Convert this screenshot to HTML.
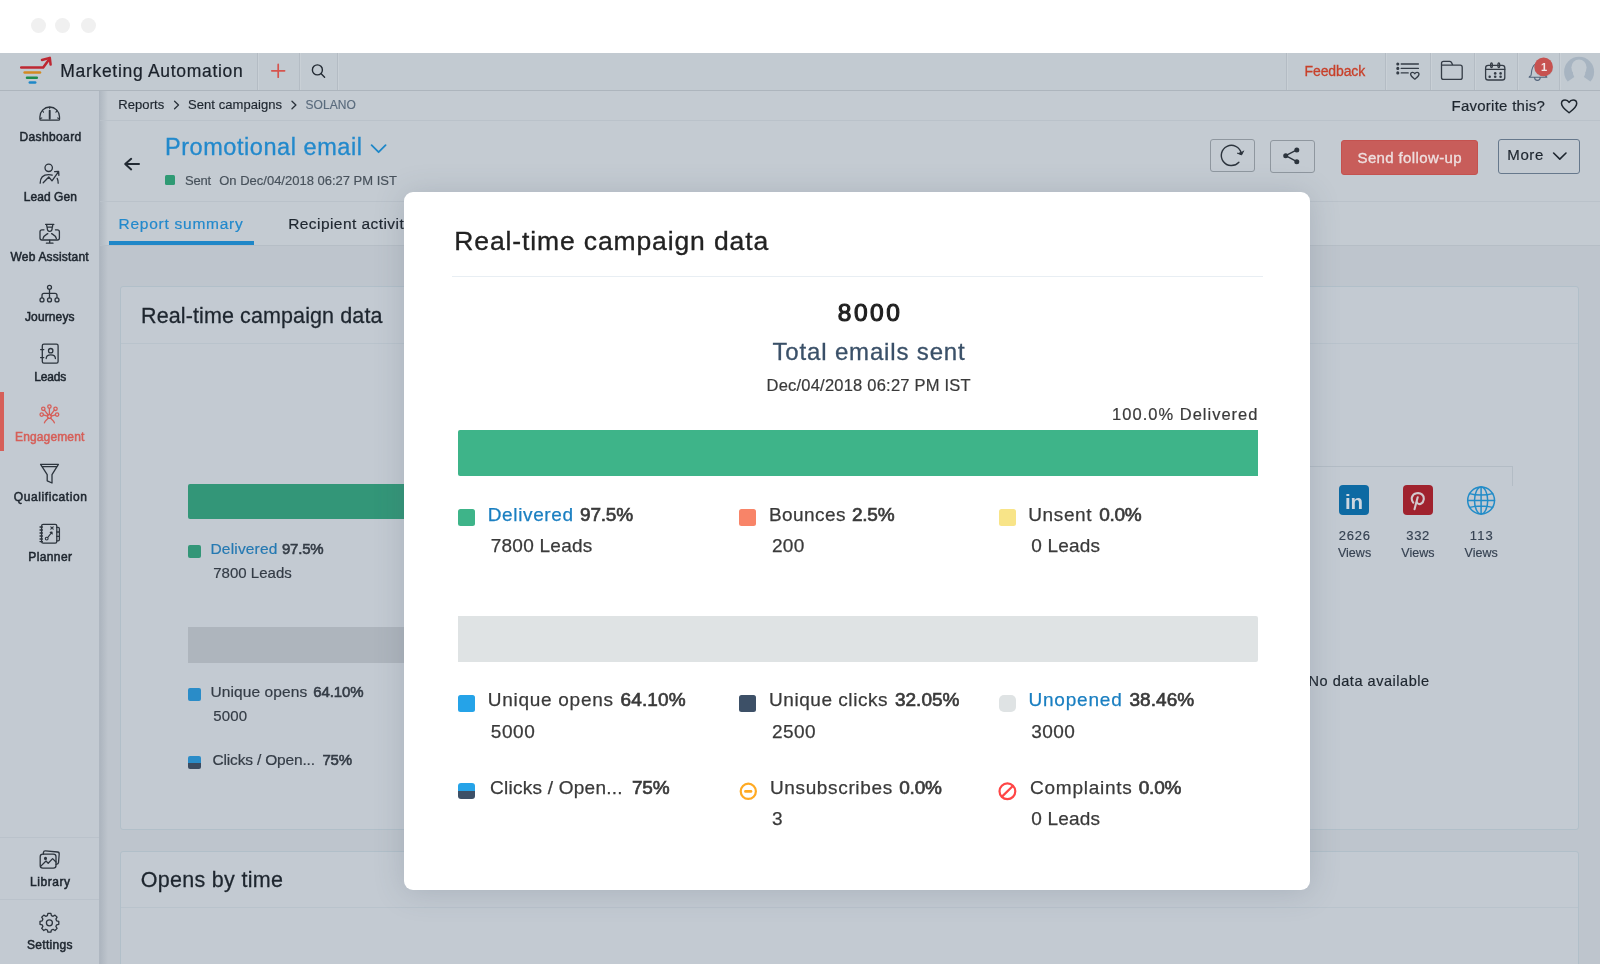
<!DOCTYPE html>
<html lang="en">
<head>
<meta charset="utf-8">
<title>Marketing Automation - Promotional email report</title>
<style>
html,body{margin:0;padding:0;}
body{width:1600px;height:964px;overflow:hidden;position:relative;background:#fff;font-family:"Liberation Sans",sans-serif;}
.a{position:absolute;display:block;}
.t{position:absolute;white-space:nowrap;display:block;}
svg{position:absolute;overflow:visible;}
.dot{position:absolute;width:15px;height:15px;border-radius:50%;background:#f0f0f0;top:18px;}
.sep{position:absolute;top:53px;height:37px;width:1px;background:#b4bcc4;box-shadow:1px 0 0 rgba(255,255,255,.12);}
.hl{position:absolute;height:1px;background:#bac2ca;}
.card{position:absolute;left:120px;width:1457px;border:1px solid #b1bfc9;border-radius:3px;background:#c3cad2;}
.sq{position:absolute;width:13px;height:13px;border-radius:2px;}
.msq{position:absolute;width:17px;height:17px;border-radius:2.5px;}
.btn{position:absolute;box-sizing:border-box;border:1px solid #8f979f;border-radius:3px;}
</style>
</head>
<body>
<!-- window chrome -->
<div class="dot" style="left:30.5px"></div><div class="dot" style="left:55px"></div><div class="dot" style="left:80.5px"></div>

<div class="a" id="root" style="left:0;top:0;width:1600px;height:964px;will-change:transform">
<!-- dimmed application -->
<div class="a" style="left:0;top:53px;width:1600px;height:911px;background:#bec5cd"></div>
<div class="a" style="left:100px;top:91px;width:1500px;height:154px;background:#c4cbd2"></div>
<div class="a" style="left:0;top:53px;width:1600px;height:37px;background:#c2cad1"></div>
<div class="a" style="left:0;top:90px;width:1600px;height:1px;background:#adb5bd"></div>
<div class="sep" style="left:257px"></div><div class="sep" style="left:299px"></div><div class="sep" style="left:337px"></div>
<div class="sep" style="left:1286px"></div><div class="sep" style="left:1385px"></div><div class="sep" style="left:1430px"></div>
<div class="sep" style="left:1474px"></div><div class="sep" style="left:1517px"></div><div class="sep" style="left:1559px"></div>

<!-- sidebar -->
<div class="a" style="left:0;top:91px;width:100px;height:873px;background:#c3cad2"></div>
<div class="a" style="left:99px;top:91px;width:9px;height:873px;background:linear-gradient(90deg,rgba(150,160,172,.48),rgba(150,160,172,0))"></div>
<div class="a" style="left:0;top:392px;width:3.5px;height:58.5px;background:#d65f59"></div>
<div class="hl" style="left:0;top:837px;width:99px;background:#bac2cb"></div>
<div class="hl" style="left:0;top:899px;width:99px;background:#bac2cb"></div>

<!-- header lines -->
<div class="hl" style="left:100px;top:120px;width:1500px"></div>
<div class="hl" style="left:100px;top:201px;width:1500px"></div>
<div class="hl" style="left:100px;top:245px;width:1500px;background:#b6bec6"></div>
<div class="a" style="left:109px;top:241px;width:144.5px;height:4px;background:#1f87c8"></div>

<!-- header buttons -->
<div class="btn" style="left:1210px;top:139px;width:45px;height:33px"></div>
<div class="btn" style="left:1270px;top:140px;width:45px;height:33px"></div>
<div class="a" style="left:1341px;top:140px;width:136.5px;height:35px;border-radius:3px;background:#c85d5a;box-sizing:border-box;border:1px solid #c4524f"></div>
<div class="btn" style="left:1497.5px;top:139px;width:82.5px;height:34.5px;border-color:#66788c"></div>
<div class="a" style="left:164.75px;top:175px;width:10px;height:10px;border-radius:1.5px;background:#2f9a74"></div>

<!-- cards -->
<div class="card" style="top:286px;height:542px"></div>
<div class="hl" style="left:121px;top:343px;width:1457px;background:#b9c3cc"></div>
<div class="card" style="top:851px;height:140px"></div>
<div class="hl" style="left:121px;top:907px;width:1457px;background:#b9c3cc"></div>

<div class="a" style="left:188px;top:484px;width:500px;height:35px;border-radius:2px;background:#339678"></div>
<div class="a" style="left:188px;top:627px;width:500px;height:35.5px;background:#aeb5bd"></div>
<div class="sq" style="left:188px;top:545px;background:#339678"></div>
<div class="sq" style="left:188px;top:688.25px;background:#2a8cc8"></div>
<div class="sq" style="left:188px;top:756px;height:12.5px;background:linear-gradient(180deg,#2a8cc8 0,#2a8cc8 54%,#3b4b60 54%,#3b4b60 100%)"></div>

<div class="a" style="left:1200px;top:466px;width:312px;height:1px;background:#b3bcc5"></div>
<div class="a" style="left:1512px;top:466px;width:1px;height:20px;background:#b3bcc5"></div>
<div class="a" style="left:1339px;top:485px;width:30px;height:30px;border-radius:4px;background:#0d6aa3"></div>
<div class="a" style="left:1403px;top:485px;width:30px;height:30px;border-radius:4px;background:#a0222e"></div>

<svg class="ic" width="1600" height="964" viewBox="0 0 1600 964" style="left:0;top:0" fill="none" stroke-linecap="round" stroke-linejoin="round">
<!-- logo -->
<g stroke-width="2.5">
<path d="M21.2 67.5H43.2L49.4 59" stroke="#be2832"/>
<path d="M42 60L49.8 57.9L50.6 64.6" stroke="#be2832"/>
<path d="M24.6 72.6H40" stroke="#d38a22"/>
<path d="M27 77.7H36.8" stroke="#1e8c4c"/>
<path d="M29.8 82.5H35.2" stroke="#1e88c8"/>
</g>
<!-- plus, search -->
<path d="M271.8 70.8H284.6M278.2 64.4V77.2" stroke="#d6544e" stroke-width="1.7"/>
<g stroke="#232b34" stroke-width="1.4">
<circle cx="317.4" cy="69.9" r="5"/><path d="M321.2 73.7L324.6 77.2"/>
</g>
<!-- top right icons -->
<g stroke="#343c46" stroke-width="1.3">
<circle cx="1397.8" cy="64" r="0.9" fill="#343c46"/><circle cx="1397.8" cy="68.4" r="0.9" fill="#343c46"/><circle cx="1397.8" cy="72.9" r="0.9" fill="#343c46"/>
<path d="M1401.2 64H1418.4M1401.2 68.4H1418.4M1401.2 72.9H1408.2"/>
<path d="M1414.8 79.2C1412.8 77.6 1410.6 76.2 1410.6 74.3C1410.6 73 1411.6 72.3 1412.6 72.3C1413.6 72.3 1414.4 72.9 1414.8 73.7C1415.2 72.9 1416 72.3 1417 72.3C1418 72.3 1419 73 1419 74.3C1419 76.2 1416.8 77.6 1414.8 79.2Z"/>
<path d="M1441.5 77.4V63.4Q1441.5 61.4 1443.5 61.4H1449.6Q1450.8 61.4 1451.4 62.4L1452.9 65.2H1460.2Q1462.2 65.2 1462.2 67.2V77.4Q1462.2 79.4 1460.2 79.4H1443.5Q1441.5 79.4 1441.5 77.4ZM1441.5 65.2H1452.9"/>
<rect x="1485.6" y="65.3" width="19.2" height="14.7" rx="2.6"/>
<path d="M1485.6 69.3H1504.8"/>
<ellipse cx="1491.5" cy="65.2" rx="0.9" ry="2.4"/><ellipse cx="1498.8" cy="65.2" rx="0.9" ry="2.4"/>
<g fill="#343c46" stroke="none"><circle cx="1489.7" cy="76.8" r="1.25"/><circle cx="1495.2" cy="76.8" r="1.3"/><circle cx="1500.6" cy="76.8" r="1.3"/><circle cx="1495.2" cy="73.4" r="1.3"/><circle cx="1500.6" cy="73.4" r="1.3"/></g>
</g>
<!-- bell + badge + avatar -->
<path d="M1529.2 77.3C1529.2 76.2 1530.4 76.4 1531 75.2C1531.8 73.4 1531 67 1535 64.4C1536.6 63.4 1539.4 63.4 1541 64.4C1545 67 1544.2 73.4 1545 75.2C1545.6 76.4 1546.8 76.2 1546.8 77.3ZM1534.6 77.5C1534.6 81.3 1540.2 81.3 1540.2 77.5" stroke="#52647a" stroke-width="1.1"/>
<circle cx="1543.7" cy="67.6" r="9.4" fill="rgba(120,130,145,.25)" stroke="none"/>
<circle cx="1543.6" cy="66.9" r="9.3" fill="#c75250" stroke="none"/>
<g stroke="none"><circle cx="1579.1" cy="71.85" r="15" fill="#a7b4c1"/>
<ellipse cx="1579" cy="67.6" rx="7.6" ry="8.2" fill="#c2cad1"/>
<path d="M1573 69V74L1574.3 77L1562 85.6V89.6H1596.2V85.6L1583.9 77L1585.2 74V69Z" fill="#c2cad1"/></g>
<!-- breadcrumb chevrons, heart -->
<g stroke="#2a323b" stroke-width="1.3"><path d="M174.6 101.2L178.5 105L174.6 108.8M292 101.2L295.9 105L292 108.8"/></g>
<path d="M1569.1 112.7C1566 110.2 1561.5 107 1561.5 103.4C1561.5 101 1563.3 99.9 1565.1 99.9C1566.9 99.9 1568.3 100.9 1569.1 102.4C1569.9 100.9 1571.3 99.9 1573.1 99.9C1574.9 99.9 1576.7 101 1576.7 103.4C1576.7 107 1572.2 110.2 1569.1 112.7Z" stroke="#1e262f" stroke-width="1.5"/>
<!-- header icons -->
<path d="M125.2 164H139M131.2 158.8L125.2 164L131.2 169.4" stroke="#222a33" stroke-width="2"/>
<path d="M371.6 145.2L378.6 152.2L385.6 145.2" stroke="#1e87c8" stroke-width="1.8"/>
<path d="M1553.6 153L1559.8 159.1L1566 153" stroke="#1e262f" stroke-width="1.6"/>
<g stroke="#2c343d" stroke-width="1.4">
<path d="M1238.9 162.2A10.1 10.1 0 1 1 1241.2 153"/>
<path d="M1237.4 153.2L1241.6 154.9L1243.6 151" fill="#2c343d" stroke-width="1"/>
<path d="M1296.8 149.9L1285.7 155.7L1296.8 161.7"/>
<g fill="#2c343d" stroke="none"><circle cx="1285.7" cy="155.7" r="2.5"/><circle cx="1296.8" cy="149.9" r="2.5"/><circle cx="1296.8" cy="161.7" r="2.5"/></g>
</g>
<!-- sidebar icons -->
<g stroke="#2c343d" stroke-width="1.3">
<!-- dashboard -->
<path d="M40.8 120.2Q39.9 120.2 39.9 119.2V116.8A9.8 9.8 0 0 1 59.5 116.8V119.2Q59.5 120.2 58.6 120.2Z"/>
<path d="M49.7 107.2V108.6M42.5 110.6L43.5 112.2M56.9 110.6L55.9 112.2M40.4 118.4L41.8 117.9M59 118.4L57.6 117.9" stroke-width="1.1"/>
<path d="M49.7 110.8V118.8" stroke-width="1.9"/>
<!-- lead gen -->
<circle cx="48.7" cy="167.8" r="3.7"/>
<path d="M40.2 183.2C40.2 177.6 43.6 174.6 48.7 174.6C50 174.6 51.2 174.8 52.2 175.2M57.2 178.4C57.9 179.8 58.2 181.4 58.2 183.2"/>
<path d="M43.2 182.8L48.8 177L52 180.8L58.2 172.2M54.6 171.6L58.6 171.4L58.9 175.4"/>
<!-- web assistant -->
<path d="M44 229.8H42Q40 229.8 40 231.8V238Q40 240 42 240H57.4Q59.4 240 59.4 238V231.8Q59.4 229.8 57.4 229.8H55.4"/>
<path d="M49.7 240.2V243M46.4 243.2H53"/>
<path d="M45.6 224.4H53.8M46.6 224.6L47 227.2H52.4L52.8 224.6M47.2 227.4C47.2 232.6 52.2 232.6 52.2 227.4M43 238.6C43.4 235.4 46 234.8 47.8 233.6M56.4 238.6C56 235.4 53.4 234.8 51.6 233.6"/>
<!-- journeys -->
<circle cx="49.5" cy="287.3" r="2"/><circle cx="42" cy="299.9" r="2"/><circle cx="49.5" cy="299.9" r="2"/><circle cx="57" cy="299.9" r="2"/>
<path d="M49.5 289.4V297.8M42 297.8V295.4Q42 293.4 44 293.4H55Q57 293.4 57 295.4V297.8"/>
<!-- leads -->
<rect x="42.3" y="344.2" width="15.8" height="19" rx="1.6"/>
<path d="M40.6 349.6H43.8M40.6 357.6H43.8"/>
<circle cx="50.7" cy="350.7" r="2.2"/><path d="M46.2 358.6C46.2 353.6 55.4 353.6 55.4 358.6"/>
<!-- funnel -->
<path d="M40.6 464.4H58.4L52 474.6V483L47.2 480.8V474.6ZM41.8 466.6H57.2"/>
<!-- planner -->
<rect x="41.6" y="524.4" width="15.2" height="18.8" rx="1.6"/>
<path d="M40 527H42.4M40 530H42.4M40 533H42.4M40 536H42.4M40 539H42.4M40 541.6H42.4M56.8 527.4H58Q59.4 527.4 59.4 528.8V539.4Q59.4 540.8 58 540.8H56.8M56.8 532H59.4M56.8 536.4H59.4"/>
<path d="M50.8 526.8L53.2 529.2M53.2 526.8L50.8 529.2M48 537.2L51.6 532.6M50.2 532.4L52 532L52.2 534" stroke-width="1.1"/>
<circle cx="46.7" cy="538.6" r="1.4" stroke-width="1.1"/>
<!-- library -->
<rect x="40.2" y="854.2" width="15.8" height="14" rx="2.6"/>
<path d="M43.4 854V852.6Q43.6 850.8 45.4 850.9L57.6 852Q59.4 852.2 59.2 854L58.5 862.6Q58.4 864 56.2 864.4"/>
<path d="M40.6 866.4L46 861L48.2 863.2L52.6 858.6L56 862"/>
<circle cx="45.5" cy="858.4" r="0.9" fill="#2c343d"/>
<!-- settings -->
<circle cx="49.4" cy="922.8" r="3"/>
<path d="M47.9 913.4h3l.5 2.2 1.7.7 1.9-1.2 2.1 2.1-1.2 1.9.7 1.7 2.2.5v3l-2.2.5-.7 1.7 1.2 1.9-2.1 2.1-1.9-1.2-1.7.7-.5 2.2h-3l-.5-2.2-1.7-.7-1.9 1.2-2.1-2.1 1.2-1.9-.7-1.7-2.2-.5v-3l2.2-.5.7-1.7-1.2-1.9 2.1-2.1 1.9 1.2 1.7-.7z"/>
</g>
<!-- engagement (active) -->
<g stroke="#d65f59" stroke-width="1.3">
<circle cx="49.4" cy="416.4" r="1.9"/>
<circle cx="49.4" cy="406.6" r="1.7"/><circle cx="43.3" cy="408.8" r="1.7"/><circle cx="55.5" cy="408.8" r="1.7"/><circle cx="41.7" cy="414.6" r="1.7"/><circle cx="57.1" cy="414.6" r="1.7"/>
<path d="M49.4 408.4V414.4M44.4 410.2L48.2 415M54.4 410.2L50.6 415M43.4 414.9L47.5 416.1M55.4 414.9L51.3 416.1M48.4 418C46.8 419.6 45 420.6 44.4 422.8M50.4 418C52 419.6 53.8 420.6 54.4 422.8"/>
</g>
<!-- globe -->
<g stroke="#228cc8" stroke-width="1.5">
<circle cx="1481.1" cy="500.5" r="13.4"/><ellipse cx="1481.1" cy="500.5" rx="6.6" ry="13.4"/>
<path d="M1481.1 487.1V513.9M1467.7 500.5H1494.5M1469.6 493.6C1476 495.6 1486.2 495.6 1492.6 493.6M1469.6 507.4C1476 505.4 1486.2 505.4 1492.6 507.4"/>
</g>
<!-- pinterest p -->
<path d="M1417.7 497.2L1414.5 509.2M1413.2 502.6C1410.6 499.4 1411.4 494.3 1416.6 493.3C1421.4 492.5 1424.3 495.6 1423.7 499.5C1423.1 503.3 1420.3 504.9 1418.1 503.7C1417.1 503.1 1416.8 502.3 1416.8 501.6" stroke="#d3c8cd" stroke-width="2.1"/>
</svg>
<span class="t" style="left:1541px;top:60.5px;font-size:11px;line-height:13px;font-weight:700;color:#f2e6e6">1</span>
<span class="t" style="left:1345px;top:490px;font-size:20.5px;line-height:24px;font-weight:700;letter-spacing:-0.2px;color:#cdd6df">in</span>

<span class="t" style="left:60.25px;top:60.00px;font-size:17.5px;line-height:22px;letter-spacing:0.698px;color:#1a212a;-webkit-text-stroke:0.23px currentColor;">Marketing Automation</span>
<span class="t" style="left:1304.50px;top:62.00px;font-size:14px;line-height:18px;letter-spacing:-0.105px;color:#c8402a;-webkit-text-stroke:0.29px currentColor;">Feedback</span>
<span class="t" style="left:118.30px;top:96.00px;font-size:13px;line-height:17px;letter-spacing:0.063px;color:#1e262f;-webkit-text-stroke:0.17px currentColor;">Reports</span>
<span class="t" style="left:188.00px;top:96.00px;font-size:13px;line-height:17px;letter-spacing:0.060px;color:#1e262f;-webkit-text-stroke:0.17px currentColor;">Sent campaigns</span>
<span class="t" style="left:305.50px;top:97.00px;font-size:12px;line-height:16px;letter-spacing:0.064px;color:#5a6b7d;-webkit-text-stroke:0.16px currentColor;">SOLANO</span>
<span class="t" style="left:1451.50px;top:96.00px;font-size:15px;line-height:19px;letter-spacing:0.254px;color:#1e262f;-webkit-text-stroke:0.19px currentColor;">Favorite this?</span>
<span class="t" style="left:165.00px;top:132.00px;font-size:23.5px;line-height:30px;letter-spacing:0.556px;color:#2289cc;-webkit-text-stroke:0.31px currentColor;">Promotional email</span>
<span class="t" style="left:185.00px;top:172.00px;font-size:13px;line-height:17px;letter-spacing:-0.250px;color:#47515b;-webkit-text-stroke:0.17px currentColor;">Sent</span>
<span class="t" style="left:219.25px;top:172.00px;font-size:13px;line-height:17px;letter-spacing:-0.003px;color:#47515b;-webkit-text-stroke:0.17px currentColor;">On Dec/04/2018 06:27 PM IST</span>
<span class="t" style="left:1357.50px;top:148.00px;font-size:15px;line-height:19px;letter-spacing:0.374px;color:#eedfdf;-webkit-text-stroke:0.32px currentColor;">Send follow-up</span>
<span class="t" style="left:1507.25px;top:145.00px;font-size:15px;line-height:19px;letter-spacing:0.639px;color:#1e262f;-webkit-text-stroke:0.19px currentColor;">More</span>
<span class="t" style="left:118.50px;top:214.00px;font-size:15.5px;line-height:19px;letter-spacing:0.746px;color:#2289cc;-webkit-text-stroke:0.20px currentColor;">Report summary</span>
<span class="t" style="left:288.20px;top:214.00px;font-size:15.5px;line-height:19px;letter-spacing:0.435px;color:#1e262f;-webkit-text-stroke:0.20px currentColor;">Recipient activities</span>
<span class="t" style="left:19.50px;top:129.00px;font-size:12px;line-height:16px;letter-spacing:0.371px;color:#1e262f;-webkit-text-stroke:0.51px currentColor;">Dashboard</span>
<span class="t" style="left:23.75px;top:189.00px;font-size:12px;line-height:16px;letter-spacing:0.066px;color:#1e262f;-webkit-text-stroke:0.51px currentColor;">Lead Gen</span>
<span class="t" style="left:10.50px;top:249.00px;font-size:12px;line-height:16px;letter-spacing:0.196px;color:#1e262f;-webkit-text-stroke:0.51px currentColor;">Web Assistant</span>
<span class="t" style="left:25.00px;top:309.00px;font-size:12px;line-height:16px;letter-spacing:0.116px;color:#1e262f;-webkit-text-stroke:0.51px currentColor;">Journeys</span>
<span class="t" style="left:34.25px;top:369.00px;font-size:12px;line-height:16px;letter-spacing:-0.174px;color:#1e262f;-webkit-text-stroke:0.51px currentColor;">Leads</span>
<span class="t" style="left:15.00px;top:429.00px;font-size:12px;line-height:16px;letter-spacing:0.143px;color:#d65f59;-webkit-text-stroke:0.51px currentColor;">Engagement</span>
<span class="t" style="left:13.75px;top:489.00px;font-size:12px;line-height:16px;letter-spacing:0.595px;color:#1e262f;-webkit-text-stroke:0.51px currentColor;">Qualification</span>
<span class="t" style="left:28.25px;top:549.00px;font-size:12px;line-height:16px;letter-spacing:0.397px;color:#1e262f;-webkit-text-stroke:0.51px currentColor;">Planner</span>
<span class="t" style="left:30.00px;top:874.00px;font-size:12px;line-height:16px;letter-spacing:0.553px;color:#1e262f;-webkit-text-stroke:0.51px currentColor;">Library</span>
<span class="t" style="left:27.00px;top:937.00px;font-size:12px;line-height:16px;letter-spacing:0.306px;color:#1e262f;-webkit-text-stroke:0.51px currentColor;">Settings</span>
<span class="t" style="left:141.00px;top:302.00px;font-size:21.5px;line-height:28px;letter-spacing:0.111px;color:#1e262f;-webkit-text-stroke:0.28px currentColor;">Real-time campaign data</span>
<span class="t" style="left:210.50px;top:539.00px;font-size:15.5px;line-height:19px;letter-spacing:0.175px;color:#2579b2;-webkit-text-stroke:0.20px currentColor;">Delivered</span>
<span class="t" style="left:282.00px;top:539.00px;font-size:15px;line-height:19px;letter-spacing:-0.236px;color:#343c46;-webkit-text-stroke:0.58px currentColor;">97.5%</span>
<span class="t" style="left:213.25px;top:563.00px;font-size:15px;line-height:19px;letter-spacing:0.010px;color:#343c46;-webkit-text-stroke:0.19px currentColor;">7800 Leads</span>
<span class="t" style="left:210.50px;top:682.00px;font-size:15.5px;line-height:19px;letter-spacing:0.099px;color:#343c46;-webkit-text-stroke:0.20px currentColor;">Unique opens</span>
<span class="t" style="left:313.25px;top:682.00px;font-size:15px;line-height:19px;letter-spacing:-0.107px;color:#343c46;-webkit-text-stroke:0.58px currentColor;">64.10%</span>
<span class="t" style="left:213.25px;top:706.00px;font-size:15px;line-height:19px;letter-spacing:0.158px;color:#343c46;-webkit-text-stroke:0.19px currentColor;">5000</span>
<span class="t" style="left:212.50px;top:750.00px;font-size:15.5px;line-height:19px;letter-spacing:-0.169px;color:#343c46;-webkit-text-stroke:0.20px currentColor;">Clicks / Open...</span>
<span class="t" style="left:322.50px;top:750.00px;font-size:15px;line-height:19px;letter-spacing:-0.250px;color:#343c46;-webkit-text-stroke:0.58px currentColor;">75%</span>
<span class="t" style="left:1338.80px;top:527.00px;font-size:13px;line-height:17px;letter-spacing:0.753px;color:#364252;-webkit-text-stroke:0.17px currentColor;">2626</span>
<span class="t" style="left:1337.90px;top:545.00px;font-size:12.5px;line-height:16px;letter-spacing:0.033px;color:#364252;-webkit-text-stroke:0.16px currentColor;">Views</span>
<span class="t" style="left:1406.30px;top:527.00px;font-size:13px;line-height:17px;letter-spacing:0.620px;color:#364252;-webkit-text-stroke:0.17px currentColor;">332</span>
<span class="t" style="left:1401.25px;top:545.00px;font-size:12.5px;line-height:16px;letter-spacing:0.033px;color:#364252;-webkit-text-stroke:0.16px currentColor;">Views</span>
<span class="t" style="left:1469.70px;top:527.00px;font-size:13px;line-height:17px;letter-spacing:1.202px;color:#364252;-webkit-text-stroke:0.17px currentColor;">113</span>
<span class="t" style="left:1464.60px;top:545.00px;font-size:12.5px;line-height:16px;letter-spacing:0.033px;color:#364252;-webkit-text-stroke:0.16px currentColor;">Views</span>
<span class="t" style="left:1308.50px;top:672.00px;font-size:14.5px;line-height:18px;letter-spacing:0.532px;color:#1e262f;-webkit-text-stroke:0.19px currentColor;">No data available</span>
<span class="t" style="left:140.75px;top:866.00px;font-size:21.5px;line-height:28px;letter-spacing:0.299px;color:#1e262f;-webkit-text-stroke:0.28px currentColor;">Opens by time</span>

<!-- modal -->
<div class="a" style="left:404px;top:192px;width:906px;height:698px;border-radius:9px;background:#fff;box-shadow:0 2px 30px rgba(70,85,105,.21)"></div>
<div class="a" style="left:452px;top:276px;width:810.5px;height:1px;background:#e8eef3"></div>
<div class="a" style="left:458px;top:430px;width:799.7px;height:46px;border-radius:2px 0 0 2px;background:#3eb489"></div>
<div class="a" style="left:458px;top:616.25px;width:799.7px;height:45.5px;border-radius:0 2px 2px 0;background:#dfe3e4"></div>
<div class="msq" style="left:458px;top:509px;background:#3eb489"></div>
<div class="msq" style="left:739.25px;top:509px;background:#f88468"></div>
<div class="msq" style="left:998.5px;top:509px;background:#f8e488"></div>
<div class="msq" style="left:458px;top:695px;background:#25a3e8"></div>
<div class="msq" style="left:739.25px;top:695px;background:#3d5067"></div>
<div class="msq" style="left:998.5px;top:695px;border-radius:5px;background:#dfe3e4"></div>
<div class="msq" style="left:458px;top:783px;height:16px;border-radius:3px;background:linear-gradient(180deg,#25a3e8 0,#25a3e8 53%,#3d5067 53%,#3d5067 100%)"></div>
<svg width="1600" height="964" viewBox="0 0 1600 964" style="left:0;top:0" fill="none" stroke-linecap="round">
<circle cx="748.3" cy="791.3" r="7.6" stroke="#ffaa23" stroke-width="2.2"/><path d="M745.4 791.4H751" stroke="#ffaa23" stroke-width="2.6"/>
<circle cx="1007.4" cy="791.3" r="7.9" stroke="#ff4646" stroke-width="2.2"/><path d="M1002 796.6L1012.8 786" stroke="#ff4646" stroke-width="2.2"/>
</svg>
<span class="t" style="left:454.30px;top:224.00px;font-size:26.5px;line-height:34px;letter-spacing:0.875px;color:#222;-webkit-text-stroke:0.34px currentColor;">Real-time campaign data</span>
<span class="t" style="left:837.75px;top:297.00px;font-size:24.5px;line-height:31px;letter-spacing:2.541px;color:#1f1f1f;-webkit-text-stroke:1.09px currentColor;">8000</span>
<span class="t" style="left:772.50px;top:336.00px;font-size:24px;line-height:31px;letter-spacing:0.839px;color:#3a5068;-webkit-text-stroke:0.31px currentColor;">Total emails sent</span>
<span class="t" style="left:766.50px;top:374.00px;font-size:16.5px;line-height:22px;letter-spacing:0.219px;color:#3a3a3a;-webkit-text-stroke:0.21px currentColor;">Dec/04/2018 06:27 PM IST</span>
<span class="t" style="left:1112.10px;top:403.00px;font-size:16.5px;line-height:22px;letter-spacing:1.009px;color:#3a3a3a;-webkit-text-stroke:0.21px currentColor;">100.0% Delivered</span>
<span class="t" style="left:487.75px;top:502.00px;font-size:19px;line-height:25px;letter-spacing:0.632px;color:#1a7fc1;-webkit-text-stroke:0.25px currentColor;">Delivered</span>
<span class="t" style="left:580.00px;top:502.00px;font-size:19px;line-height:25px;letter-spacing:-0.182px;color:#3a3a3a;-webkit-text-stroke:0.67px currentColor;">97.5%</span>
<span class="t" style="left:490.75px;top:533.00px;font-size:19px;line-height:25px;letter-spacing:0.243px;color:#3a3a3a;-webkit-text-stroke:0.25px currentColor;">7800 Leads</span>
<span class="t" style="left:769.00px;top:502.00px;font-size:19px;line-height:25px;letter-spacing:0.427px;color:#3a3a3a;-webkit-text-stroke:0.25px currentColor;">Bounces</span>
<span class="t" style="left:852.00px;top:502.00px;font-size:19px;line-height:25px;letter-spacing:-0.250px;color:#3a3a3a;-webkit-text-stroke:0.67px currentColor;">2.5%</span>
<span class="t" style="left:772.00px;top:533.00px;font-size:19px;line-height:25px;letter-spacing:0.308px;color:#3a3a3a;-webkit-text-stroke:0.25px currentColor;">200</span>
<span class="t" style="left:1028.25px;top:502.00px;font-size:19px;line-height:25px;letter-spacing:0.626px;color:#3a3a3a;-webkit-text-stroke:0.25px currentColor;">Unsent</span>
<span class="t" style="left:1099.20px;top:502.00px;font-size:19px;line-height:25px;letter-spacing:-0.250px;color:#3a3a3a;-webkit-text-stroke:0.67px currentColor;">0.0%</span>
<span class="t" style="left:1031.25px;top:533.00px;font-size:19px;line-height:25px;letter-spacing:0.189px;color:#3a3a3a;-webkit-text-stroke:0.25px currentColor;">0 Leads</span>
<span class="t" style="left:487.75px;top:687.00px;font-size:19px;line-height:25px;letter-spacing:0.727px;color:#3a3a3a;-webkit-text-stroke:0.25px currentColor;">Unique opens</span>
<span class="t" style="left:620.50px;top:687.00px;font-size:19px;line-height:25px;letter-spacing:0.141px;color:#3a3a3a;-webkit-text-stroke:0.67px currentColor;">64.10%</span>
<span class="t" style="left:490.75px;top:719.00px;font-size:19px;line-height:25px;letter-spacing:0.600px;color:#3a3a3a;-webkit-text-stroke:0.25px currentColor;">5000</span>
<span class="t" style="left:769.00px;top:687.00px;font-size:19px;line-height:25px;letter-spacing:0.547px;color:#3a3a3a;-webkit-text-stroke:0.25px currentColor;">Unique clicks</span>
<span class="t" style="left:895.00px;top:687.00px;font-size:19px;line-height:25px;letter-spacing:-0.009px;color:#3a3a3a;-webkit-text-stroke:0.67px currentColor;">32.05%</span>
<span class="t" style="left:772.00px;top:719.00px;font-size:19px;line-height:25px;letter-spacing:0.433px;color:#3a3a3a;-webkit-text-stroke:0.25px currentColor;">2500</span>
<span class="t" style="left:1028.40px;top:687.00px;font-size:19px;line-height:25px;letter-spacing:0.811px;color:#1a7fc1;-webkit-text-stroke:0.25px currentColor;">Unopened</span>
<span class="t" style="left:1129.50px;top:687.00px;font-size:19px;line-height:25px;letter-spacing:0.051px;color:#3a3a3a;-webkit-text-stroke:0.67px currentColor;">38.46%</span>
<span class="t" style="left:1031.20px;top:719.00px;font-size:19px;line-height:25px;letter-spacing:0.466px;color:#3a3a3a;-webkit-text-stroke:0.25px currentColor;">3000</span>
<span class="t" style="left:490.00px;top:775.00px;font-size:19px;line-height:25px;letter-spacing:0.248px;color:#3a3a3a;-webkit-text-stroke:0.25px currentColor;">Clicks / Open...</span>
<span class="t" style="left:632.00px;top:775.00px;font-size:19px;line-height:25px;letter-spacing:-0.250px;color:#3a3a3a;-webkit-text-stroke:0.67px currentColor;">75%</span>
<span class="t" style="left:769.90px;top:775.00px;font-size:19px;line-height:25px;letter-spacing:0.654px;color:#3a3a3a;-webkit-text-stroke:0.25px currentColor;">Unsubscribes</span>
<span class="t" style="left:899.20px;top:775.00px;font-size:19px;line-height:25px;letter-spacing:-0.204px;color:#3a3a3a;-webkit-text-stroke:0.67px currentColor;">0.0%</span>
<span class="t" style="left:772.00px;top:806.00px;font-size:19px;line-height:25px;letter-spacing:0.000px;color:#3a3a3a;-webkit-text-stroke:0.25px currentColor;">3</span>
<span class="t" style="left:1030.10px;top:775.00px;font-size:19px;line-height:25px;letter-spacing:0.740px;color:#3a3a3a;-webkit-text-stroke:0.25px currentColor;">Complaints</span>
<span class="t" style="left:1138.80px;top:775.00px;font-size:19px;line-height:25px;letter-spacing:-0.250px;color:#3a3a3a;-webkit-text-stroke:0.67px currentColor;">0.0%</span>
<span class="t" style="left:1031.20px;top:806.00px;font-size:19px;line-height:25px;letter-spacing:0.198px;color:#3a3a3a;-webkit-text-stroke:0.25px currentColor;">0 Leads</span>
</div>
</body>
</html>
